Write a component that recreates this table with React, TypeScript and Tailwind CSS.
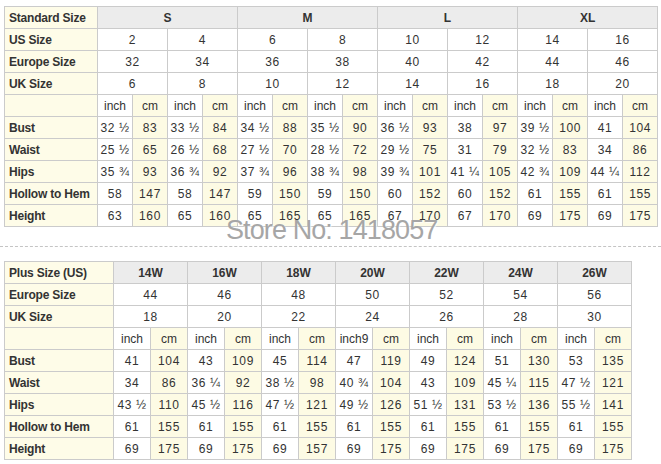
import { Fragment } from "react";

const font = { fontFamily: '"Liberation Sans", Arial, sans-serif' };

type Pair = [string, string];

const topSizes = [
  { name: "S", us: ["2", "4"], eu: ["32", "34"], uk: ["6", "8"] },
  { name: "M", us: ["6", "8"], eu: ["36", "38"], uk: ["10", "12"] },
  { name: "L", us: ["10", "12"], eu: ["40", "42"], uk: ["14", "16"] },
  { name: "XL", us: ["14", "16"], eu: ["44", "46"], uk: ["18", "20"] },
];

const topRows: { label: string; cells: Pair[] }[] = [
  { label: "Bust", cells: [["32 ½", "83"], ["33 ½", "84"], ["34 ½", "88"], ["35 ½", "90"], ["36 ½", "93"], ["38", "97"], ["39 ½", "100"], ["41", "104"]] },
  { label: "Waist", cells: [["25 ½", "65"], ["26 ½", "68"], ["27 ½", "70"], ["28 ½", "72"], ["29 ½", "75"], ["31", "79"], ["32 ½", "83"], ["34", "86"]] },
  { label: "Hips", cells: [["35 ¾", "93"], ["36 ¾", "92"], ["37 ¾", "96"], ["38 ¾", "98"], ["39 ¾", "101"], ["41 ¼", "105"], ["42 ¾", "109"], ["44 ¼", "112"]] },
  { label: "Hollow to Hem", cells: [["58", "147"], ["58", "147"], ["59", "150"], ["59", "150"], ["60", "152"], ["60", "152"], ["61", "155"], ["61", "155"]] },
  { label: "Height", cells: [["63", "160"], ["65", "160"], ["65", "165"], ["65", "165"], ["67", "170"], ["67", "170"], ["69", "175"], ["69", "175"]] },
];

const plusSizes = [
  { name: "14W", eu: "44", uk: "18", unit: "inch" },
  { name: "16W", eu: "46", uk: "20", unit: "inch" },
  { name: "18W", eu: "48", uk: "22", unit: "inch" },
  { name: "20W", eu: "50", uk: "24", unit: "inch9" },
  { name: "22W", eu: "52", uk: "26", unit: "inch" },
  { name: "24W", eu: "54", uk: "28", unit: "inch" },
  { name: "26W", eu: "56", uk: "30", unit: "inch" },
];

const plusRows: { label: string; cells: Pair[] }[] = [
  { label: "Bust", cells: [["41", "104"], ["43", "109"], ["45", "114"], ["47", "119"], ["49", "124"], ["51", "130"], ["53", "135"]] },
  { label: "Waist", cells: [["34", "86"], ["36 ¼", "92"], ["38 ½", "98"], ["40 ¾", "104"], ["43", "109"], ["45 ¼", "115"], ["47 ½", "121"]] },
  { label: "Hips", cells: [["43 ½", "110"], ["45 ½", "116"], ["47 ½", "121"], ["49 ½", "126"], ["51 ½", "131"], ["53 ½", "136"], ["55 ½", "141"]] },
  { label: "Hollow to Hem", cells: [["61", "155"], ["61", "155"], ["61", "155"], ["61", "155"], ["61", "155"], ["61", "155"], ["61", "155"]] },
  { label: "Height", cells: [["69", "175"], ["69", "175"], ["69", "157"], ["69", "175"], ["69", "175"], ["69", "175"], ["69", "175"]] },
];

/* shared cell looks */
const td = "border border-[#cbcbcb] h-[22px] p-0 text-center align-middle text-[12px] text-[#333] tracking-[0.6px]";
const lab = "border border-[#cbcbcb] h-[22px] py-0 pl-[4px] text-left align-middle text-[12px] font-bold text-[#333] bg-[#fefce8] tracking-[-0.2px]";
const head = "border border-[#cbcbcb] h-[22px] p-0 text-center align-middle text-[12px] font-bold text-[#333] bg-[#ececec]";
const yellow = "bg-[#fdfbe4]";

function UnitRow({ groups, units }: { groups: number; units?: string[] }) {
  return (
    <tr>
      <td className={lab} />
      {Array.from({ length: groups }).map((_, i) => (
        <Fragment key={i}>
          <td className={`${td} text-[#6e3040] tracking-normal`}>{units ? units[i] : "inch"}</td>
          <td className={`${td} ${yellow} text-[#5a4a3a] tracking-normal`}>cm</td>
        </Fragment>
      ))}
    </tr>
  );
}

function MeasureRow({ label, cells }: { label: string; cells: Pair[] }) {
  return (
    <tr>
      <td className={lab}>{label}</td>
      {cells.map(([inch, cm], i) => (
        <Fragment key={i}>
          <td className={td}>{inch}</td>
          <td className={`${td} ${yellow}`}>{cm}</td>
        </Fragment>
      ))}
    </tr>
  );
}

function StandardTable() {
  return (
    <table className="border-collapse table-fixed w-[653px]">
      <colgroup>
        <col className="w-[93px]" />
        {Array.from({ length: 16 }).map((_, i) => (
          <col key={i} className="w-[35px]" />
        ))}
      </colgroup>
      <tbody>
        <tr>
          <td className={lab}>Standard Size</td>
          {topSizes.map((s) => (
            <td key={s.name} colSpan={4} className={head}>{s.name}</td>
          ))}
        </tr>
        {(["us", "eu", "uk"] as const).map((k) => (
          <tr key={k}>
            <td className={lab}>{k === "us" ? "US Size" : k === "eu" ? "Europe Size" : "UK Size"}</td>
            {topSizes.flatMap((s) =>
              s[k].map((v, j) => (
                <td key={s.name + j} colSpan={2} className={td}>{v}</td>
              ))
            )}
          </tr>
        ))}
        <UnitRow groups={8} />
        {topRows.map((r) => (
          <MeasureRow key={r.label} {...r} />
        ))}
      </tbody>
    </table>
  );
}

function PlusTable() {
  return (
    <table className="border-collapse table-fixed w-[628px]">
      <colgroup>
        <col className="w-[109px]" />
        {Array.from({ length: 14 }).map((_, i) => (
          <col key={i} className="w-[37px]" />
        ))}
      </colgroup>
      <tbody>
        <tr>
          <td className={lab}>Plus Size (US)</td>
          {plusSizes.map((s) => (
            <td key={s.name} colSpan={2} className={head}>{s.name}</td>
          ))}
        </tr>
        <tr>
          <td className={lab}>Europe Size</td>
          {plusSizes.map((s) => (
            <td key={s.name} colSpan={2} className={td}>{s.eu}</td>
          ))}
        </tr>
        <tr>
          <td className={lab}>UK Size</td>
          {plusSizes.map((s) => (
            <td key={s.name} colSpan={2} className={td}>{s.uk}</td>
          ))}
        </tr>
        <UnitRow groups={7} units={plusSizes.map((s) => s.unit)} />
        {plusRows.map((r) => (
          <MeasureRow key={r.label} {...r} />
        ))}
      </tbody>
    </table>
  );
}

export default function App() {
  return (
    <div className="relative w-[661px] h-[464px] bg-white overflow-hidden" style={font}>
      <div className="pt-[6px] pl-[4px]">
        <StandardTable />
      </div>
      <div className="mt-[19px] border-t border-dashed border-[#c4c4c4]" />
      <div className="mt-[14px] pl-[4px]">
        <PlusTable />
      </div>
      {/* store watermark */}
      <div className="absolute left-[226px] top-[217px] text-[27px] leading-none tracking-[-0.9px] text-[#a6a6a6] [text-shadow:1px_1px_1px_rgba(255,255,255,0.8)]">
        Store No: 1418057
      </div>
    </div>
  );
}
